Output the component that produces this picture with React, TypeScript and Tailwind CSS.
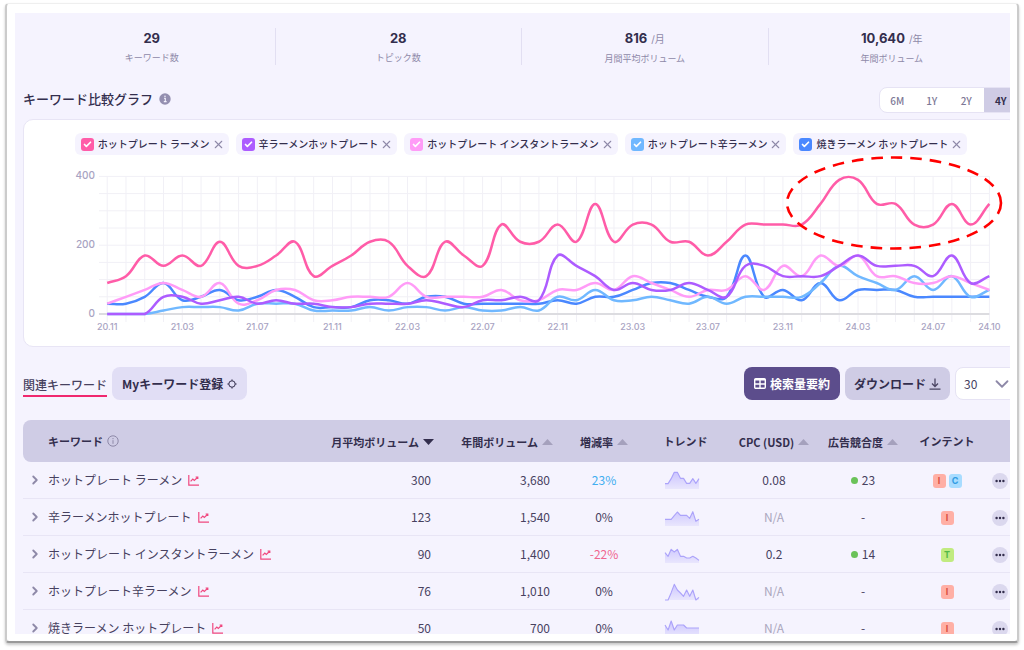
import { Check, ChevronDown, ChevronRight, X } from "lucide-react";

const stats = [
  { value: "29", unit: "", label: "キーワード数" },
  { value: "28", unit: "", label: "トピック数" },
  { value: "816", unit: "/月", label: "月間平均ボリューム" },
  { value: "10,640", unit: "/年", label: "年間ボリューム" },
];

const series = [
  {
    name: "ホットプレート ラーメン",
    color: "#ff5ca8",
    box: "bg-[#ff5ca8]",
    data: [
      90, 110, 170, 140, 170, 140, 210, 140, 140, 170, 210, 110, 140, 170, 210, 210,
      140, 110, 210, 170, 140, 260, 210, 210, 260, 210, 320, 210, 260, 260, 210, 210,
      170, 210, 260, 260, 260, 260, 320, 390, 390, 320, 320, 260, 260, 320, 260, 320,
    ],
  },
  {
    name: "辛ラーメンホットプレート",
    color: "#ad5cff",
    box: "bg-[#ad5cff]",
    data: [
      0, 0, 0, 50, 50, 30, 40, 50, 30, 40, 30, 30, 20, 20, 30, 30,
      30, 40, 30, 20, 40, 40, 50, 40, 170, 140, 110, 70, 90, 70, 70, 90,
      70, 50, 140, 140, 110, 110, 110, 140, 170, 140, 140, 140, 110, 170, 90, 110,
    ],
  },
  {
    name: "ホットプレート インスタントラーメン",
    color: "#ff9cf7",
    box: "bg-[#ff9cf7]",
    data: [
      30, 50, 70, 90, 70, 50, 90, 30, 40, 70, 70, 40, 40, 50, 50, 50,
      90, 50, 50, 50, 50, 70, 40, 40, 70, 70, 90, 70, 110, 90, 70, 50,
      70, 70, 110, 70, 140, 110, 170, 140, 170, 110, 110, 90, 90, 110, 90, 70,
    ],
  },
  {
    name: "ホットプレート辛ラーメン",
    color: "#70b8ff",
    box: "bg-[#70b8ff]",
    data: [
      0, 0, 0, 10, 20, 20, 20, 10, 30, 30, 30, 10, 10, 10, 20, 10,
      20, 20, 10, 20, 10, 10, 20, 10, 50, 40, 70, 40, 40, 50, 40, 30,
      50, 30, 50, 50, 50, 50, 90, 140, 110, 90, 70, 110, 70, 110, 50, 70,
    ],
  },
  {
    name: "焼きラーメン ホットプレート",
    color: "#4a88ff",
    box: "bg-[#4a88ff]",
    data: [
      30, 30, 50, 90, 40, 50, 70, 40, 50, 70, 50, 20, 20, 20, 40, 40,
      30, 50, 50, 30, 30, 30, 30, 30, 40, 30, 50, 50, 70, 90, 90, 70,
      50, 50, 170, 50, 70, 40, 90, 40, 70, 70, 70, 50, 50, 50, 50, 50,
    ],
  },
];

const ticks = [
  { i: 0, label: "20.11" },
  { i: 4, label: "21.03" },
  { i: 8, label: "21.07" },
  { i: 12, label: "21.11" },
  { i: 16, label: "22.03" },
  { i: 20, label: "22.07" },
  { i: 24, label: "22.11" },
  { i: 28, label: "23.03" },
  { i: 32, label: "23.07" },
  { i: 36, label: "23.11" },
  { i: 40, label: "24.03" },
  { i: 44, label: "24.07" },
  { i: 47, label: "24.10" },
];

const rows = [
  {
    keyword: "ホットプレート ラーメン",
    month: "300",
    year: "3,680",
    rate: "23%",
    cpc: "0.08",
    competition: "23",
    intents: ["I", "C"],
    trend: [38, 38, 23, 4, 4, 22, 22, 37, 37, 23, 37, 23],
  },
  {
    keyword: "辛ラーメンホットプレート",
    month: "123",
    year: "1,540",
    rate: "0%",
    cpc: "N/A",
    competition: "-",
    intents: ["I"],
    trend: [34, 34, 34, 23, 12, 22, 22, 22, 31, 11, 40, 34],
  },
  {
    keyword: "ホットプレート インスタントラーメン",
    month: "90",
    year: "1,400",
    rate: "-22%",
    cpc: "0.2",
    competition: "14",
    intents: ["T"],
    trend: [23, 34, 13, 21, 13, 34, 34, 39, 39, 34, 39, 46],
  },
  {
    keyword: "ホットプレート辛ラーメン",
    month: "76",
    year: "1,010",
    rate: "0%",
    cpc: "N/A",
    competition: "-",
    intents: ["I"],
    trend: [54, 54, 32, 7, 24, 33, 43, 24, 43, 24, 54, 46],
  },
  {
    keyword: "焼きラーメン ホットプレート",
    month: "50",
    year: "700",
    rate: "0%",
    cpc: "N/A",
    competition: "-",
    intents: ["I"],
    trend: [18, 33, 6, 33, 18, 18, 18, 27, 27, 27, 27, 27],
  },
];

const intentColors: Record<string, string> = {
  I: "bg-[#ffafa5] text-[#d9503f]",
  C: "bg-[#a8dcff] text-[#2f9be3]",
  T: "bg-[#c1eb80] text-[#54b848]",
};

const px = (i: number) => 83.2 + i * 18.77;
const py = (v: number) => 159 - v * 0.344;

// cubic spline with tension 0.4 through every month
function spline(data: number[]) {
  const pts = data.map((v, i) => ({ x: px(i), y: py(v) }));
  const ctrl = pts.map((p, i) => {
    const a = pts[i - 1] ?? p;
    const b = pts[i + 1] ?? p;
    const d1 = Math.hypot(p.x - a.x, p.y - a.y);
    const d2 = Math.hypot(b.x - p.x, b.y - p.y);
    const f1 = (0.4 * d1) / (d1 + d2);
    const f2 = (0.4 * d2) / (d1 + d2);
    return {
      inX: p.x - f1 * (b.x - a.x),
      inY: Math.min(159, p.y - f1 * (b.y - a.y)),
      outX: p.x + f2 * (b.x - a.x),
      outY: Math.min(159, p.y + f2 * (b.y - a.y)),
    };
  });
  let d = `M${pts[0].x} ${pts[0].y}`;
  for (let i = 1; i < pts.length; i++) {
    d += `C${ctrl[i - 1].outX} ${ctrl[i - 1].outY} ${ctrl[i].inX} ${ctrl[i].inY} ${pts[i].x} ${pts[i].y}`;
  }
  return d;
}

function Chart() {
  return (
    <svg viewBox="0 0 994 191" className="block w-full overflow-visible" role="img" aria-label="キーワード比較グラフ">
      <g stroke="#f1f0f6" strokeWidth="1">
        {[50, 100, 150, 200, 250, 300, 350, 400].map((v) => (
          <line key={v} x1="75" x2={px(47)} y1={py(v)} y2={py(v)} />
        ))}
        {series[0].data.map((_, i) => (
          <line key={i} x1={px(i)} x2={px(i)} y1={py(400)} y2="167" />
        ))}
      </g>
      <line x1="75" x2={px(47)} y1="159" y2="159" stroke="#dcdce0" strokeWidth="2" />
      {[...series].reverse().map((s) => (
        <path key={s.name} d={spline(s.data)} fill="none" stroke={s.color} strokeWidth="2.5" />
      ))}
      <g fill="#a8a3c2" fontSize="9" fontWeight="500" className="font-['Inter',sans-serif]">
        {[0, 200, 400].map((v) => (
          <text key={v} x="71" y={py(v) + 3} textAnchor="end" fontSize="10">
            {v}
          </text>
        ))}
        {ticks.map((t) => (
          <text key={t.i} x={px(t.i)} y="175" textAnchor="middle">
            {t.label}
          </text>
        ))}
      </g>
      <ellipse cx="870" cy="48" rx="107" ry="45.5" fill="none" stroke="#ff0000" strokeWidth="2.6" strokeDasharray="11.5 8" />
    </svg>
  );
}

function Sparkline({ data }: { data: number[] }) {
  const line = data.map((y, i) => `${i * 9.27} ${y}`).join("L");
  return (
    <svg viewBox="0 0 102 54" className="mx-auto block h-[18px] w-[34px] overflow-visible" aria-hidden="true">
      <defs>
        <linearGradient id="spark" x1="0" y1="0" x2="0" y2="54" gradientUnits="userSpaceOnUse">
          <stop offset="0" stopColor="#c9c2ff" />
          <stop offset="1" stopColor="#e9e6fd" />
        </linearGradient>
      </defs>
      <path d={`M0 54L${line}L102 54Z`} fill="url(#spark)" />
      <path d={`M${line}`} fill="none" stroke="#aca3fa" strokeWidth="3.4" strokeLinejoin="round" />
    </svg>
  );
}

function SortArrow({ active }: { active?: boolean }) {
  return active ? (
    <svg viewBox="0 0 11 6" className="h-1.5 w-[11px] fill-[#332e4d]" aria-hidden="true">
      <path d="M0 0h11L5.5 6z" />
    </svg>
  ) : (
    <svg viewBox="0 0 11 6" className="h-1.5 w-[11px] fill-[#a5a1bd]" aria-hidden="true">
      <path d="M0 6h11L5.5 0z" />
    </svg>
  );
}

function SortHeader({ children, active }: { children: string; active?: boolean }) {
  return (
    <button className="inline-flex items-center gap-1 align-middle whitespace-nowrap">
      {children}
      <SortArrow active={active} />
    </button>
  );
}

export default function App() {
  return (
    <div className="h-screen bg-white px-[5px] pt-[3px] pb-[7px] font-['Noto_Sans_CJK_JP',sans-serif] text-[#332e4d]">
      <div className="h-full rounded-sm border-x-2 border-t border-b-2 border-x-[#cbcbcb] border-t-[#efefef] border-b-[#999] bg-white pt-[9px] pr-[7px] pb-[7px] pl-2 shadow-[0_2px_3px_rgba(0,0,0,0.22)]">
        <main className="h-full overflow-hidden bg-[#f5f3fe]">
          <div className="-mr-[9px] pl-2">
            <section className="ml-1.5 mr-1 grid grid-cols-4 divide-x divide-[#e2dff2] pt-[15px]">
              {stats.map((s) => (
                <div key={s.label} className="flex h-[37px] flex-col items-center text-center">
                  <p className="font-['Inter','Noto_Sans_CJK_JP',sans-serif] text-[13px] leading-5 font-bold">
                    {s.value}
                    {s.unit && <span className="ml-1 text-[10px] font-normal text-[#8e89a8]">{s.unit}</span>}
                  </p>
                  <p className="text-[9px] leading-5 text-[#8e89a8]">{s.label}</p>
                </div>
              ))}
            </section>

            <section>
              <div className="mt-[22px] flex h-[26px] justify-between">
                <h2 className="flex h-6 items-center gap-1.5 text-[13px] leading-5 font-medium">
                  キーワード比較グラフ
                  <svg viewBox="0 0 12 12" className="size-3" aria-hidden="true">
                    <circle cx="6" cy="6" r="5.7" fill="#948fb0" />
                    <path d="M5 5.2h1.3v3.2M4.8 8.6h2.8" fill="none" stroke="#f5f3fe" strokeWidth="1.1" />
                    <circle cx="6" cy="3.2" r="0.8" fill="#f5f3fe" />
                  </svg>
                </h2>
                <div className="grid h-full w-[140px] grid-cols-4 overflow-hidden rounded-lg border border-[#e6e3f4] bg-white text-[10px] font-medium text-[#7d7896]">
                  <button>6M</button>
                  <button>1Y</button>
                  <button>2Y</button>
                  <button className="bg-[#cfcce5] font-bold text-[#332e4d]">4Y</button>
                </div>
              </div>

              <div className="mt-1.5 rounded-[10px] border border-[#e8e5f5] bg-white pt-[13px]">
                <div className="flex justify-center gap-[7px]">
                  {series.map((s) => (
                    <div key={s.name} className="flex h-[22px] items-center gap-1 rounded-md bg-[#f5f3fe] px-1.5">
                      <label className="flex items-center gap-1 text-[10px] leading-5 font-medium whitespace-nowrap">
                        <span className="grid size-[13px] shrink-0 place-items-center">
                          <input
                            type="checkbox"
                            defaultChecked
                            className={`col-start-1 row-start-1 size-[13px] appearance-none rounded-[3px] ${s.box}`}
                          />
                          <Check className="pointer-events-none col-start-1 row-start-1 size-[9px] text-white" strokeWidth={4.5} />
                        </span>
                        {s.name}
                      </label>
                      <button aria-label={`${s.name}を削除`}>
                        <X className="-mx-0.5 size-[13px] text-[#8e89a8]" strokeWidth={2} />
                      </button>
                    </div>
                  ))}
                </div>
                <Chart />
              </div>
            </section>

            <div className="mt-5 flex h-[33px] items-center gap-[5px] text-[12px] font-medium">
              <button className="border-b-2 border-[#f0286f] pt-1 leading-5 whitespace-nowrap text-[#47415f]">関連キーワード</button>
              <button className="flex h-full items-center gap-1 rounded-lg bg-[#e1def5] px-2.5 font-bold whitespace-nowrap">
                Myキーワード登録
                <svg viewBox="0 0 10 10" className="size-2.5 fill-none stroke-[#332e4d]" aria-hidden="true">
                  <circle cx="5" cy="5" r="3.2" />
                  <path d="M5 .4v1.4M5 8.2v1.4M.4 5h1.4M8.2 5h1.4" />
                </svg>
              </button>
              <button className="ml-auto flex h-full items-center gap-1 rounded-lg bg-[#5c4d8c] px-2.5 font-bold whitespace-nowrap text-white">
                <svg viewBox="0 0 12 11" className="h-[11px] w-3 fill-none stroke-white stroke-[1.4]" aria-hidden="true">
                  <rect x=".7" y=".7" width="10.6" height="9.6" rx="1" />
                  <path d="M.7 1.8h10.6M.7 6h10.6M6 2v8.4" />
                </svg>
                検索量要約
              </button>
              <button className="flex h-full items-center gap-[3px] rounded-lg bg-[#cfcce5] px-[9px] font-bold whitespace-nowrap">
                ダウンロード
                <svg viewBox="0 0 12 12" className="size-3 fill-none stroke-[#4b4563] stroke-[1.3]" aria-hidden="true">
                  <path d="M6 .5v8M3 5.5l3 3 3-3M.5 11.2h11" />
                </svg>
              </button>
              <div className="relative h-full w-16">
                <select
                  aria-label="表示件数"
                  className="h-full w-full appearance-none rounded-lg border border-[#e6e3f4] bg-white pl-2 font-normal text-[#47415f]"
                >
                  <option>30</option>
                  <option>50</option>
                  <option>100</option>
                </select>
                <ChevronDown className="pointer-events-none absolute top-1.5 right-1.5 size-[22px] text-[#8e89a8]" strokeWidth={2} />
              </div>
            </div>

            <table className="mt-5 w-full table-fixed border-separate border-spacing-0 text-[12px] text-[#47415f]">
              <colgroup>
                <col />
                <col className="w-[126px]" />
                <col className="w-[119px]" />
                <col className="w-[78px]" />
                <col className="w-[85px]" />
                <col className="w-[92px]" />
                <col className="w-[86px]" />
                <col className="w-[82px]" />
                <col className="w-[31px]" />
              </colgroup>
              <thead>
                <tr className="h-[42px] text-[11px] text-[#332e4d] [&>th]:bg-[#cfcce5] [&>th]:font-bold">
                  <th className="rounded-l-lg pl-[25px] text-left">
                    <span className="flex items-center gap-1">
                      キーワード
                      <svg viewBox="0 0 12 12" className="size-3 fill-none stroke-[#8e89a8]" aria-hidden="true">
                        <circle cx="6" cy="6" r="5.2" />
                        <path d="M6 5.2v3.6M6 3v1.2" />
                      </svg>
                    </span>
                  </th>
                  <th className="pr-3 text-right"><SortHeader active>月平均ボリューム</SortHeader></th>
                  <th className="pr-3 text-right"><SortHeader>年間ボリューム</SortHeader></th>
                  <th><SortHeader>増減率</SortHeader></th>
                  <th>トレンド</th>
                  <th><SortHeader>CPC (USD)</SortHeader></th>
                  <th><SortHeader>広告競合度</SortHeader></th>
                  <th>インテント</th>
                  <th></th>
                </tr>
              </thead>
              <tbody>
                {rows.map((r) => (
                  <tr key={r.keyword} className="h-[37px] text-center [&>td]:border-b [&>td]:border-[#e8e5f5]">
                    <td>
                      <div className="flex items-center pl-[5px] whitespace-nowrap">
                        <button aria-label="詳細を開く">
                          <ChevronRight className="mr-1.5 size-3.5 text-[#8e89a8]" strokeWidth={3.2} />
                        </button>
                        {r.keyword}
                        <svg viewBox="0 0 11 11" className="ml-1.5 size-[11px] fill-none stroke-[#f0487f] stroke-[1.2]" aria-hidden="true">
                          <path d="M.8 0v10.2H11M2.6 6.4l2.2-2.3 1.5 1.4 3.4-3.2M7.6 2h2.2v2" />
                        </svg>
                      </div>
                    </td>
                    <td className="pr-[15px] text-right">{r.month}</td>
                    <td className="pr-[15px] text-right">{r.year}</td>
                    <td className={r.rate === "23%" ? "text-[#41aef0]" : r.rate === "-22%" ? "text-[#f0668f]" : ""}>{r.rate}</td>
                    <td className="pr-2">
                      <Sparkline data={r.trend} />
                    </td>
                    <td className={r.cpc === "N/A" ? "text-[#aaa6bd]" : ""}>{r.cpc}</td>
                    <td>
                      {r.competition === "-" ? (
                        "-"
                      ) : (
                        <span className="flex items-center justify-center gap-1">
                          <span className="size-[7px] rounded-full bg-[#6ac259]"></span>
                          {r.competition}
                        </span>
                      )}
                    </td>
                    <td>
                      <div className="flex justify-center gap-[3px] pt-0.5">
                        {r.intents.map((t) => (
                          <span
                            key={t}
                            className={`flex h-3.5 w-[13px] items-center justify-center rounded-[3px] font-['Inter',sans-serif] text-[9px] font-bold ${intentColors[t]}`}
                          >
                            {t}
                          </span>
                        ))}
                      </div>
                    </td>
                    <td className="pt-0.5 pl-1">
                      <button className="flex size-4 items-center justify-center rounded-full bg-[#dbd8ee]" aria-label="メニュー">
                        <svg viewBox="0 0 10 4" className="h-1 w-2.5 fill-[#332e4d]" aria-hidden="true">
                          <circle cx="1.6" cy="2" r="1.2" />
                          <circle cx="5" cy="2" r="1.2" />
                          <circle cx="8.4" cy="2" r="1.2" />
                        </svg>
                      </button>
                    </td>
                  </tr>
                ))}
              </tbody>
            </table>
          </div>
        </main>
      </div>
    </div>
  );
}
